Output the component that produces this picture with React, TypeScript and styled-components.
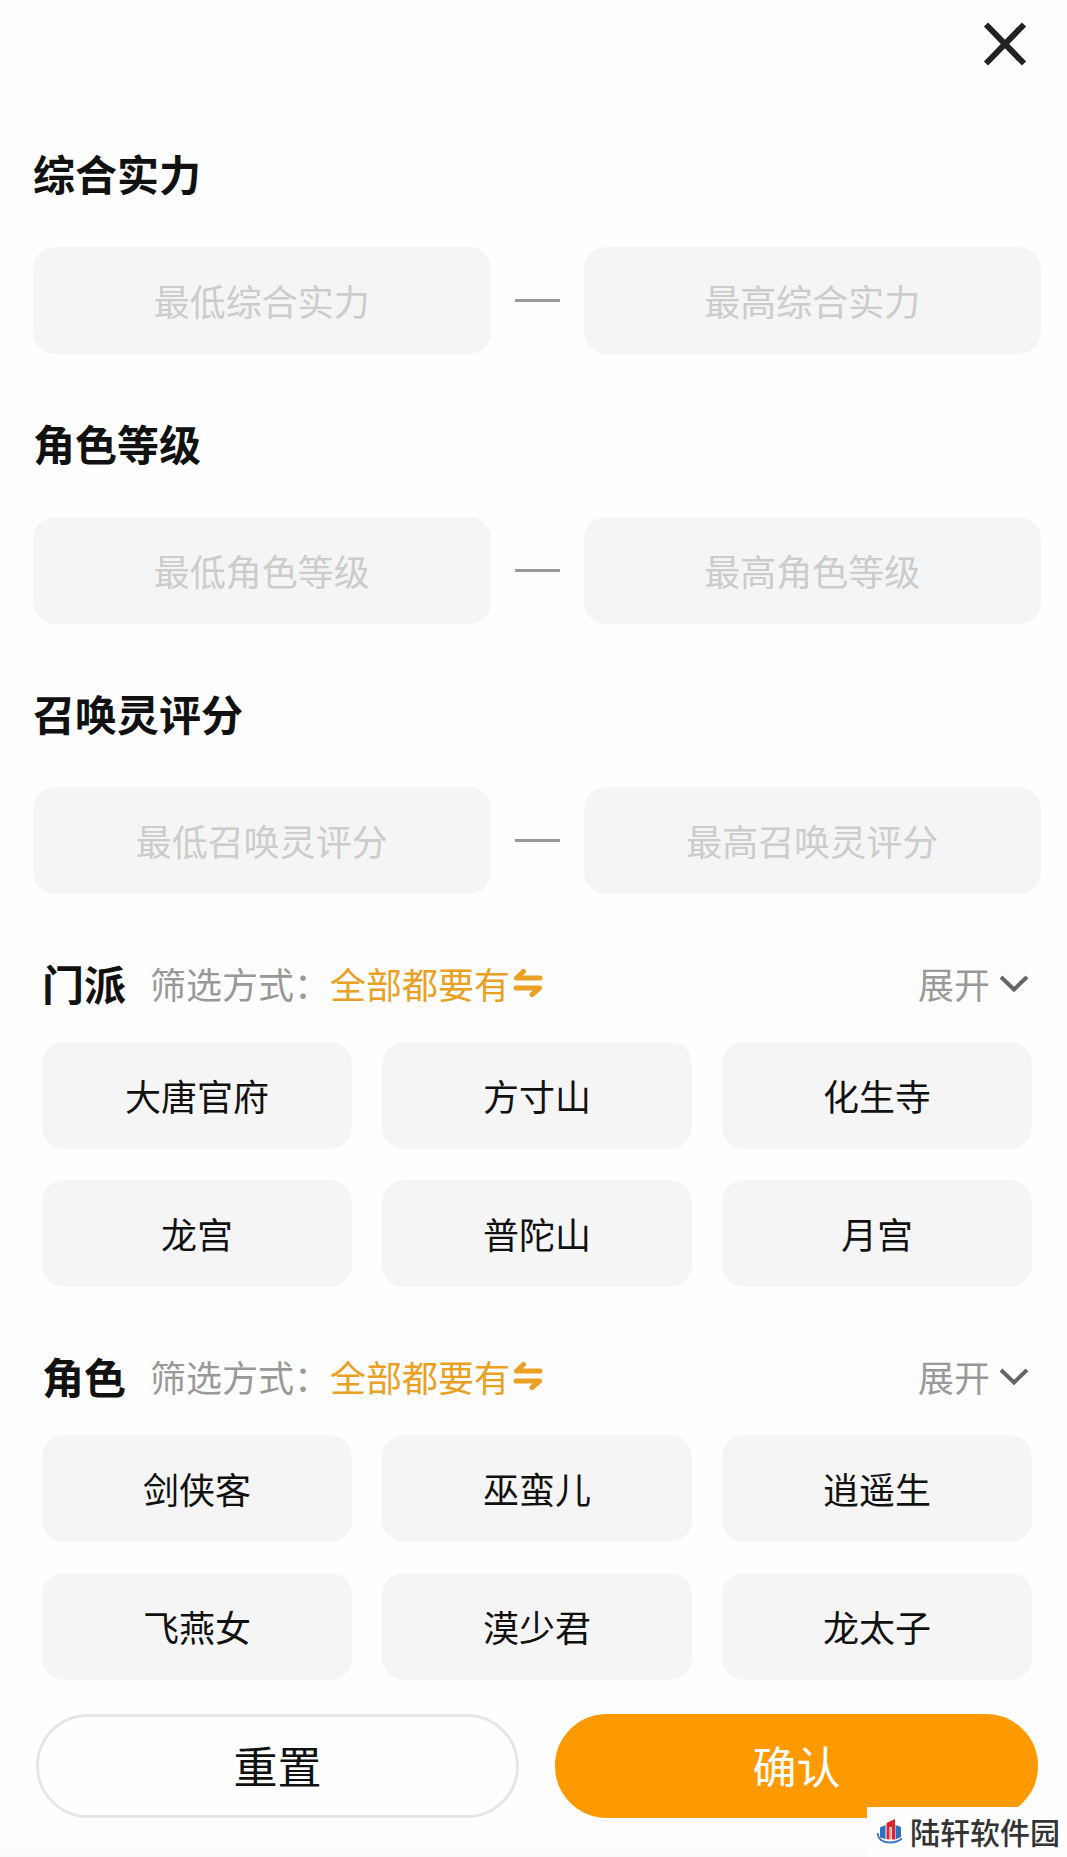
import React, { useState } from "react";
import styled, { createGlobalStyle } from "styled-components";

const GlobalStyle = createGlobalStyle`
  *, *::before, *::after { box-sizing: border-box; }
  body {
    margin: 0;
    background: #fefefe;
    color: #111;
    font-family: "Noto Sans CJK SC", "Noto Sans", sans-serif;
  }
  button, input { font: inherit; color: inherit; }
  button { border: 0; padding: 0; background: none; cursor: pointer; }
`;

const Page = styled.main`
  position: relative;
  display: flex;
  flex-direction: column;
  min-height: 100vh;
  background: linear-gradient(to top, #f9f9f9, #fefefe 12px);
`;

const Header = styled.header`
  display: flex;
  justify-content: flex-end;
  height: 143px;
  padding: 20px 38px 0;
`;

const CloseButton = styled.button`
  display: block;
  width: 48px;
  height: 48px;
`;

const Form = styled.form`
  display: flex;
  flex-direction: column;
  gap: 59px;
  padding: 0 26px 0 33px;
`;

const RangeSection = styled.section`
  display: flex;
  flex-direction: column;
  gap: 44px;
`;

const Title = styled.h2`
  margin: 0;
  font-size: 42px;
  font-weight: 700;
  line-height: 60px;
`;

const RangeRow = styled.div`
  display: flex;
  align-items: center;
  gap: 24px;
`;

const RangeInput = styled.input`
  flex: 1;
  min-width: 0;
  height: 107px;
  padding: 0 16px 2px;
  border: 0;
  border-radius: 22px;
  background: #f5f5f5;
  font-size: 36px;
  text-align: center;

  &::placeholder { color: #ccc; opacity: 1; }
`;

const Dash = styled.span`
  width: 45px;
  height: 3px;
  background: #999;
`;

const ChoiceSection = styled.section`
  display: flex;
  flex-direction: column;
  gap: 29px;
  padding: 0 9px;
`;

const ChoiceHeader = styled.div`
  display: flex;
  align-items: center;
  font-size: 36px;
  line-height: 60px;
`;

const ModeLabel = styled.span`
  margin-left: 24px;
  color: #999;
`;

const ModeButton = styled.button`
  display: flex;
  align-items: center;
  gap: 3px;
  color: #e9a023;
`;

const ExpandButton = styled.button`
  display: flex;
  align-items: center;
  gap: 8px;
  margin-left: auto;
  color: #999;
`;

const ChipGrid = styled.div`
  display: grid;
  grid-template-columns: repeat(3, 1fr);
  gap: 31px 30px;
`;

const Chip = styled.button<{ $selected: boolean }>`
  height: 107px;
  padding-bottom: 2px;
  border-radius: 22px;
  background: ${(p) => (p.$selected ? "#ffe9c7" : "#f5f5f5")};
  font-size: 36px;
`;

const Footer = styled.footer`
  display: grid;
  grid-template-columns: 1fr 1fr;
  gap: 36px;
  padding: 34px 29px 39px 36px;
`;

const ActionButton = styled.button<{ $primary?: boolean }>`
  height: 104px;
  padding-bottom: 2px;
  border: 3px solid ${(p) => (p.$primary ? "#ff9900" : "#e6e6e6")};
  border-radius: 52px;
  background: ${(p) => (p.$primary ? "#ff9900" : "#fefefe")};
  color: ${(p) => (p.$primary ? "#fff" : "#111")};
  font-size: 44px;
`;

const SiteBadge = styled.div`
  position: absolute;
  right: 0;
  bottom: 0;
  display: flex;
  align-items: center;
  gap: 7px;
  height: 50px;
  padding: 0 7px 2px 10px;
  background: #fefefe;
  color: #333;
  font-size: 30px;
  font-weight: 500;
`;

const CloseIcon = () => (
  <svg width="48" height="48" viewBox="0 0 48 48" fill="none" stroke="#222" strokeWidth="6" aria-hidden="true">
    <path d="M5 4.5 43 43.5M43 4.5 5 43.5" />
  </svg>
);

const SwapIcon = () => (
  <svg width="30" height="30" viewBox="0 0 30 30" fill="none" stroke="currentColor" strokeWidth="5" strokeLinecap="round" strokeLinejoin="round" aria-hidden="true">
    <path d="M27 10H3.500L10.500 3.500M3 20H26.500L19 26.500" />
  </svg>
);

const ChevronIcon = () => (
  <svg width="34" height="24" viewBox="0 0 34 24" fill="none" stroke="#666" strokeWidth="4" aria-hidden="true">
    <path d="M3 6 16 18.500 29 6" />
  </svg>
);

const BadgeLogo = () => (
  <svg width="26" height="26" viewBox="0 0 26 26" aria-hidden="true">
    <path fill="#2a6fc0" d="M3 9.500 8.500 7v14L3 19.500zM18.500 7 24 9v10l-5.500 2.500z" />
    <path fill="#e2232e" d="M9.500 5 18 1v20.500h-3V9h-2.500v12.500l-3-.5z" />
    <path fill="#f5a3a6" d="M13 10h1.500v11H13z" />
    <path fill="none" stroke="#3c78c3" strokeWidth="1.800" d="M1 15C0 21 6 24.500 13 24.500c5 0 9-1.500 12-4" />
  </svg>
);

const ranges = ["综合实力", "角色等级", "召唤灵评分"];

const choices = [
  { title: "门派", options: ["大唐官府", "方寸山", "化生寺", "龙宫", "普陀山", "月宫"] },
  { title: "角色", options: ["剑侠客", "巫蛮儿", "逍遥生", "飞燕女", "漠少君", "龙太子"] },
];

export default function App() {
  const [selected, setSelected] = useState<string[]>([]);
  const toggle = (name: string) =>
    setSelected((now) => (now.includes(name) ? now.filter((n) => n !== name) : [...now, name]));

  return (
    <Page>
      <GlobalStyle />
      <Header>
        <CloseButton type="button" aria-label="关闭">
          <CloseIcon />
        </CloseButton>
      </Header>
      <Form id="filters" onSubmit={(e) => e.preventDefault()} onReset={() => setSelected([])}>
        {ranges.map((title) => (
          <RangeSection key={title}>
            <Title>{title}</Title>
            <RangeRow>
              <RangeInput inputMode="numeric" placeholder={`最低${title}`} aria-label={`最低${title}`} />
              <Dash />
              <RangeInput inputMode="numeric" placeholder={`最高${title}`} aria-label={`最高${title}`} />
            </RangeRow>
          </RangeSection>
        ))}
        {choices.map(({ title, options }) => (
          <ChoiceSection key={title}>
            <ChoiceHeader>
              <Title>{title}</Title>
              <ModeLabel>筛选方式：</ModeLabel>
              <ModeButton type="button">
                全部都要有
                <SwapIcon />
              </ModeButton>
              <ExpandButton type="button">
                展开
                <ChevronIcon />
              </ExpandButton>
            </ChoiceHeader>
            <ChipGrid>
              {options.map((name) => (
                <Chip
                  key={name}
                  type="button"
                  $selected={selected.includes(name)}
                  aria-pressed={selected.includes(name)}
                  onClick={() => toggle(name)}
                >
                  {name}
                </Chip>
              ))}
            </ChipGrid>
          </ChoiceSection>
        ))}
      </Form>
      <Footer>
        <ActionButton type="reset" form="filters">重置</ActionButton>
        <ActionButton type="submit" form="filters" $primary>确认</ActionButton>
      </Footer>
      <SiteBadge>
        <BadgeLogo />
        陆轩软件园
      </SiteBadge>
    </Page>
  );
}
